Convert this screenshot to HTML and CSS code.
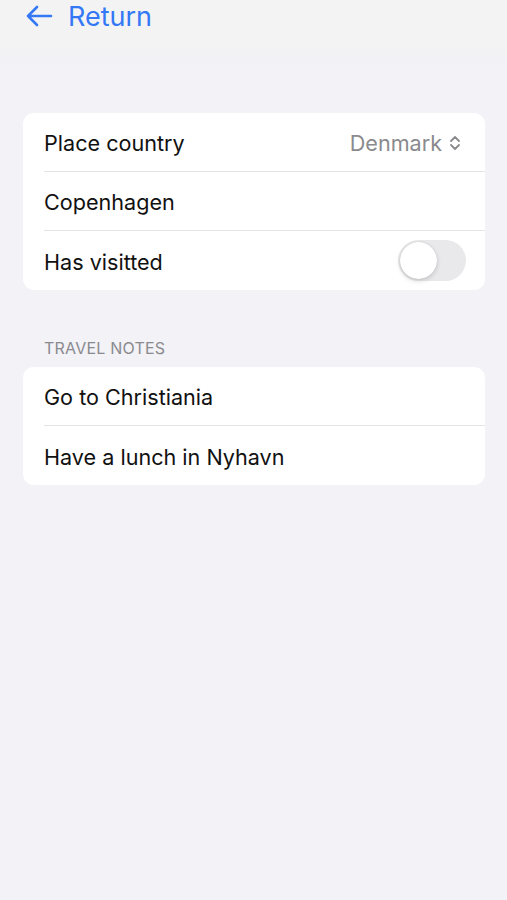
FILE: index.html
```html
<!DOCTYPE html>
<html lang="en">
<head>
    <meta charset="UTF-8">
    <meta name="viewport" content="width=device-width, initial-scale=1.0">
    <title>Place</title>
    <link rel="stylesheet" href="styles.css">
</head>
<body>

    <div class="nav-bar">
        <a class="back" href="#">
            <svg class="back-icon" width="28" height="24" viewBox="0 0 28 24">
                <path d="M26 12H3M12 3L3 12l9 9" fill="none" stroke="#3478f6" stroke-width="2.6" stroke-linecap="round" stroke-linejoin="round"/>
            </svg>
            <span>Return</span>
        </a>
    </div>

    <div class="content">
        <div class="group">
            <div class="row">
                <span class="label">Place country</span>
                <span class="value">
                    Denmark
                    <svg width="12" height="16" viewBox="0 0 12 16">
                        <path d="M2 6l4-4 4 4M2 10l4 4 4-4" fill="none" stroke="#8a8a8e" stroke-width="1.8" stroke-linecap="round" stroke-linejoin="round"/>
                    </svg>
                </span>
            </div>
            <div class="row">
                <span class="label">Copenhagen</span>
            </div>
            <div class="row">
                <span class="label">Has visitted</span>
                <div class="toggle"><div class="knob"></div></div>
            </div>
        </div>

        <div class="section-title">TRAVEL NOTES</div>
        <div class="group">
            <div class="row">
                <span class="label">Go to Christiania</span>
            </div>
            <div class="row">
                <span class="label">Have a lunch in Nyhavn</span>
            </div>
        </div>
    </div>

</body>
</html>
```

FILE: styles.css
```css
body {
    font-family: Inter, "Noto Sans", sans-serif;
    margin: 0;
    padding: 0;
    background-color: #f2f2f7;
    color: #000;
    min-height: 900px;
}

.nav-bar {
    height: 64px;
    background: linear-gradient(#f3f3f3 0%, #f3f3f3 70%, #f2f2f7 100%);
    padding-left: 25px;
    box-sizing: border-box;
}

.back {
    display: flex;
    align-items: center;
    text-decoration: none;
    color: #3478f6;
    font-size: 27px;
    height: 32px;
    gap: 15px;
}

.content {
    margin: 49px 22px 0 23px;
}

.group {
    background-color: white;
    border-radius: 11px;
    overflow: hidden;
}

.row {
    height: 59px;
    margin-left: 21px;
    padding-right: 20px;
    padding-top: 2px;
    display: flex;
    align-items: center;
    justify-content: space-between;
    font-size: 21.6px;
    color: #111;
    border-bottom: 1px solid #e4e4e6;
    box-sizing: border-box;
}

.row:last-child {
    border-bottom: none;
}

.value {
    color: #8a8a8e;
    display: flex;
    align-items: center;
    gap: 7px;
    padding-right: 4px;
}

.toggle {
    width: 68px;
    height: 41px;
    border-radius: 21px;
    background-color: #e9e9eb;
    position: relative;
    margin-right: -1px;
    margin-top: -2px;
}

.knob {
    position: absolute;
    top: 2px;
    left: 2px;
    width: 37px;
    height: 37px;
    border-radius: 50%;
    background-color: white;
    box-shadow: 0 2px 5px rgba(0, 0, 0, 0.15), 0 0 1px rgba(0, 0, 0, 0.2);
}

.section-title {
    font-size: 16px;
    color: #8a8a8e;
    margin: 48px 0 9px 21px;
    letter-spacing: 0.2px;
}
```
